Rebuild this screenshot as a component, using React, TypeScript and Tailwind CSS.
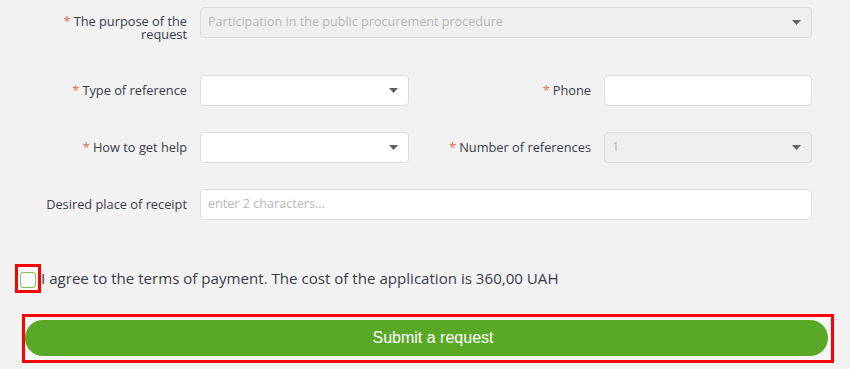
const font = { fontFamily: '"Open Sans", "Liberation Sans", sans-serif' };

function Arrow() {
  return (
    <svg width="9" height="5" viewBox="0 0 9 5" className="shrink-0">
      <path d="M0 0 L9 0 L4.5 5 Z" fill="#5e6068" />
    </svg>
  );
}

function Label({ text, required = true, className = "" }: { text: string; required?: boolean; className?: string }) {
  return (
    <div className={"text-right text-[12.8px] leading-[13px] font-medium text-[#383c4a] " + className}>
      {required && <span className="text-[#f26b4f] mr-[3px]">*</span>}
      {text}
    </div>
  );
}

function Select({ value = "", disabled = false, className = "" }: { value?: string; disabled?: boolean; className?: string }) {
  return (
    <div
      className={
        "h-[31px] flex items-center justify-between pl-[7px] pr-[10px] rounded-[4px] border border-[#dddddd] " +
        (disabled ? "bg-[#efefef] " : "bg-white ") +
        className
      }
    >
      <span className="text-[12.6px] text-[#b8b8b8] truncate">{value}</span>
      <Arrow />
    </div>
  );
}

function Input({ placeholder = "", className = "" }: { placeholder?: string; className?: string }) {
  return (
    <div className={"h-[31px] flex items-center px-[7px] rounded-[4px] border border-[#dddddd] bg-white " + className}>
      <span className="text-[12.6px] text-[#b8b8b8]">{placeholder}</span>
    </div>
  );
}

export default function App() {
  return (
    <div className="w-[850px] h-[369px] bg-[#f2f2f2] overflow-hidden" style={font}>
      <div className="pt-[7px] w-[812px]">
        {/* purpose */}
        <div className="flex items-start gap-[13px]">
          <Label text="The purpose of the request" className="w-[187px] pt-[8px] pl-[60px]" />
          <Select value="Participation in the public procurement procedure" disabled className="flex-1" />
        </div>

        {/* type + phone */}
        <div className="flex items-center gap-[13px] mt-[34px]">
          <Label text="Type of reference" className="w-[187px]" />
          <Select className="w-[209px]" />
          <Label text="Phone" className="flex-1" />
          <Input className="w-[208px]" />
        </div>

        {/* how + number */}
        <div className="flex items-center gap-[13px] mt-[26px]">
          <Label text="How to get help" className="w-[187px]" />
          <Select className="w-[209px]" />
          <Label text="Number of references" className="flex-1" />
          <Select value="1" disabled className="w-[208px]" />
        </div>

        {/* place */}
        <div className="flex items-center gap-[13px] mt-[26px]">
          <Label text="Desired place of receipt" required={false} className="w-[187px]" />
          <Input placeholder="enter 2 characters..." className="flex-1" />
        </div>
      </div>

      {/* agree */}
      <div className="flex items-center mt-[44px] pl-[15px]">
        <div className="border-[3px] border-[#ff0000] bg-white pt-[5px] pb-[2px] px-[2px]">
          <div className="w-[16px] h-[16px] rounded-[3px] border-[1.5px] border-[#7cbf4c] bg-white" />
        </div>
        <span className="text-[15.1px] font-medium text-[#383c4a]">
          I agree to the terms of payment. The cost of the application is 360,00 UAH
        </span>
      </div>

      {/* submit */}
      <div className="ml-[22px] mt-[21px] w-[812px] border-[3px] border-[#ff0000] bg-[#f6f6f6] pt-[3px] pb-[4px] pr-[3px]">
        <button
          className="w-full h-[36px] rounded-full bg-[#59a926] text-white text-[16px] pl-[13px]"
          style={{ fontFamily: '"Liberation Sans", Arial, sans-serif' }}
        >
          Submit a request
        </button>
      </div>
    </div>
  );
}
